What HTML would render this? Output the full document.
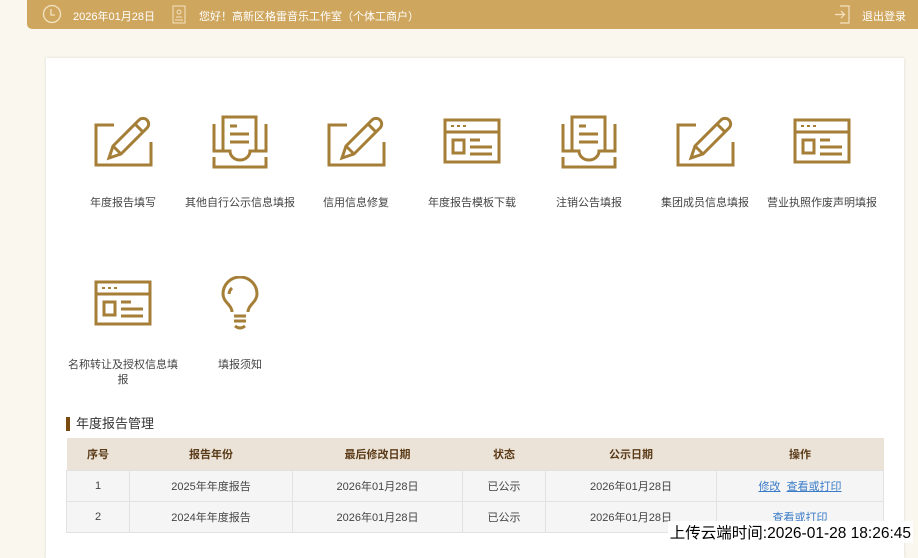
<!DOCTYPE html>
<html><head><meta charset="utf-8"><style>
*{margin:0;padding:0;box-sizing:border-box}
body{width:918px;height:545px;overflow:hidden;background:#faf7ef;font-family:"Liberation Sans","Noto Sans CJK SC",sans-serif;font-size:12px;color:#333;position:relative}
.hdr{position:absolute;left:27px;top:0;width:891px;height:29px;background:#cfa65e;border-bottom-left-radius:5px;color:#fff;font-size:11px}
.hdr span{position:absolute;top:8px}
.card{position:absolute;left:46px;top:58px;width:858px;height:500px;background:#fff;box-shadow:0 0 3px rgba(0,0,0,.12)}
.it{position:absolute;width:116px;text-align:center;font-size:11px;color:#444;line-height:15px}
.it svg{display:block;margin:0 auto 26px}
.ttl{position:absolute;left:66px;top:417px;font-size:13px;color:#333;border-left:4px solid #7a4a10;padding-left:6px;line-height:14px}
table{position:absolute;left:66px;top:438px;width:818px;border-collapse:collapse;font-size:11px}
th{background:#ebe3d8;height:32px;color:#5b3b18;font-weight:bold}
td{background:#f5f5f5;height:31px;text-align:center;border:1px solid #e2e2e2;color:#444}
a{color:#3a7bc8;text-decoration:underline}
.up{position:absolute;right:5px;top:521px;font-size:15.5px;color:#000;background:#fff;padding:0 2px}
</style></head><body>
<div class="hdr">
<svg style="position:absolute;left:15px;top:4px" width="20" height="20" viewBox="0 0 20 20"><circle cx="10" cy="10" r="8.5" fill="none" stroke="#f3e3c3" stroke-width="1.3"/><path d="M9 5v6h4" fill="none" stroke="#f3e3c3" stroke-width="1.3"/></svg>
<span style="left:46px">2026年01月28日</span>
<svg style="position:absolute;left:145px;top:5px" width="14" height="19" viewBox="0 0 14 19"><rect x="1" y="1" width="12" height="17" fill="none" stroke="#f3e3c3"/><circle cx="7" cy="7" r="2" fill="none" stroke="#f3e3c3"/><path d="M4 12h6M3 15h8" stroke="#f3e3c3"/></svg>
<span style="left:172px">您好！高新区格雷音乐工作室（个体工商户）</span>
<svg style="position:absolute;left:807px;top:5px" width="16" height="19" viewBox="0 0 16 19"><path d="M6 1h9v17H6" fill="none" stroke="#f3e3c3" stroke-width="1.2"/><path d="M1 9.5h9M7 6l3.5 3.5L7 13" fill="none" stroke="#f3e3c3" stroke-width="1.2"/></svg>
<span style="left:835px">退出登录</span>
</div>
<div class="card"></div>
<svg width="0" height="0" style="position:absolute"><defs>
<g id="pen" fill="none" stroke="#a57e37" stroke-width="3"><path d="M21 11H3v40h55V28"/><path d="M16 44l4-12 26-26 a4 4 0 0 1 8 8L28 40z M20 32l8 8 M42 10l8 8"/></g>
<g id="tray" fill="none" stroke="#a57e37" stroke-width="3"><path d="M13 36V3h33v33"/><path d="M20 12h7M20 20h19M20 28h19"/><path d="M4 10v27h16a10 9 0 0 0 20 0h16V10"/><path d="M4 43v10h52V43"/></g>
<g id="win" fill="none" stroke="#a57e37" stroke-width="3"><rect x="3" y="6" width="54" height="12"/><path d="M3 18v30h54V18"/><rect x="11" y="26" width="11" height="13"/><path d="M28 26h10M28 33h22M28 40h22"/><path d="M9 12h3M15 12h3M21 12h3" stroke-width="2"/></g>
<g id="bulb" fill="none" stroke="#a57e37" stroke-width="3"><path d="M22 36C22 29 13 26 13 18A17 17 0 0 1 47 18C47 26 38 29 38 36"/><path d="M22 12a9 9 0 0 0-3 6"/><path d="M24 40h12M24 45h12M25 50q5 4 10 0"/></g>
</defs></svg>
<div class="it" style="left:65px;top:114px"><svg width="60" height="56"><use href="#pen"/></svg>年度报告填写</div>
<div class="it" style="left:182px;top:114px"><svg width="60" height="56"><use href="#tray"/></svg>其他自行公示信息填报</div>
<div class="it" style="left:298px;top:114px"><svg width="60" height="56"><use href="#pen"/></svg>信用信息修复</div>
<div class="it" style="left:414px;top:114px"><svg width="60" height="56"><use href="#win"/></svg>年度报告模板下载</div>
<div class="it" style="left:531px;top:114px"><svg width="60" height="56"><use href="#tray"/></svg>注销公告填报</div>
<div class="it" style="left:647px;top:114px"><svg width="60" height="56"><use href="#pen"/></svg>集团成员信息填报</div>
<div class="it" style="left:764px;top:114px"><svg width="60" height="56"><use href="#win"/></svg>营业执照作废声明填报</div>
<div class="it" style="left:65px;top:276px"><svg width="60" height="56"><use href="#win"/></svg>名称转让及授权信息填报</div>
<div class="it" style="left:182px;top:276px"><svg width="60" height="60" style="margin-bottom:22px"><use href="#bulb"/></svg>填报须知</div>
<div class="ttl">年度报告管理</div>
<table>
<tr><th style="width:63px">序号</th><th style="width:163px">报告年份</th><th style="width:170px">最后修改日期</th><th style="width:83px">状态</th><th style="width:171px">公示日期</th><th>操作</th></tr>
<tr><td>1</td><td>2025年年度报告</td><td>2026年01月28日</td><td>已公示</td><td>2026年01月28日</td><td><a>修改</a>&nbsp; <a>查看或打印</a></td></tr>
<tr><td>2</td><td>2024年年度报告</td><td>2026年01月28日</td><td>已公示</td><td>2026年01月28日</td><td><a>查看或打印</a></td></tr>
</table>
<div class="up">上传云端时间:2026-01-28 18:26:45</div>
</body></html>
